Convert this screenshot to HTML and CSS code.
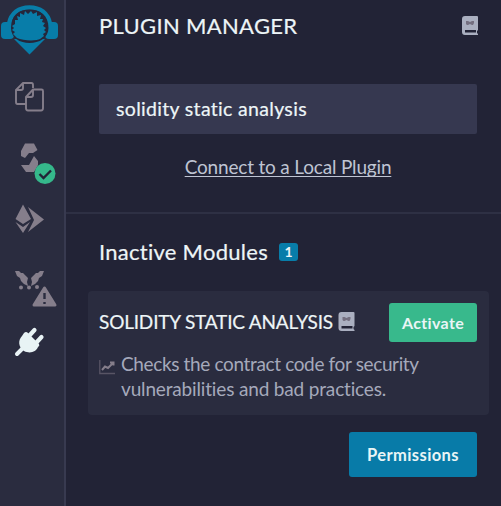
FILE: index.html
```html
<!DOCTYPE html>
<html lang="en">
<head>
<meta charset="utf-8">
<title>Plugin Manager</title>
<link rel="stylesheet" href="styles.css">
</head>
<body>
<nav class="rail">
  <svg class="icon logo" width="64" height="64" viewBox="0 0 64 64">
    <path d="M9 24C11 13 19 7.500 29.500 7.500S48 13 50 24" fill="none" stroke="currentColor" stroke-width="4.500"/>
    <rect x="1" y="22" width="13" height="17" rx="4"/><rect x="45" y="22" width="13" height="17" rx="4"/>
    <path d="M14 39L29.500 54.500L45 39Z"/>
    <path class="cut" d="M11 28C11 15 19 9.500 29.500 9.500S48.500 15 48.500 28C48.500 38 39 43 29.500 43S11 38 11 28Z"/>
    <path d="M15 20l3 0-1-4 3 1 0-4 4 2 1-4 3 3 3-3 2 3 4-2 0 4 4-1-1 4 3 0-1 3 3 1-2 3 3 2-2 2 2 2-3 2 1 2-4 3C37 41 23 41 17 38l-4-4 2-2-3-2 2-2-2-2 3-2z"/>
  </svg>
  <svg class="icon" width="64" height="60" viewBox="0 64 64 60">
    <g fill="none" stroke="currentColor" stroke-width="1.900" stroke-linejoin="round">
      <path d="M26 104H17.500Q16 104 16 102V90L23 83H31.500Q33 83 33 85V88M23 83V88Q23 90 21 90H16"/>
      <path d="M26 97L33 89.500H41.500Q43 89.500 43 91V108Q43 110.500 41 110.500H28Q26 110.500 26 108ZM33 89.500V95Q33 97 31 97H26"/>
    </g>
  </svg>
  <svg class="icon" width="64" height="66" viewBox="0 124 64 66">
    <path d="M25 143.500H34L37.500 150L33 153H29L25 158L21 156V151ZM34 156L38 161V165L34 172H26L21 165H29Z"/>
    <circle class="ok" cx="45" cy="173.500" r="10.500"/>
    <path class="tick" d="M39.500 174L43.500 178L51 170.500"/>
  </svg>
  <svg class="icon" width="64" height="58" viewBox="0 190 64 58">
    <path d="M23 204.500L31 219L23 224L15.500 219ZM15.500 222L23 227L30 222L23 233ZM28 207L44 219.500L28 232L34 220Z"/>
  </svg>
  <svg class="icon" width="64" height="66" viewBox="0 248 64 66">
    <path d="M15 271l4 0 2 2 2 0 5 5-1 4 1 4-4-2-3-3-1-3-3-2zM44 271l-4 0-2 2-2 0-5 5 1 4-1 4 4-2 3-3 1-3 3-2z"/>
    <circle cx="21" cy="287.500" r="2"/><circle cx="29" cy="287.500" r="2"/><circle cx="37" cy="287" r="2"/>
    <path class="warn" d="M44.500 288L55 305H34Z"/>
    <path class="mark" d="M44.500 293V299M44.500 302V304"/>
  </svg>
  <svg class="icon active" width="64" height="60" viewBox="0 314 64 60">
    <g fill="none" stroke="currentColor" stroke-linecap="round"><path d="M17 354L23 348" stroke-width="4"/><path d="M29 336L34.500 330M36 343L41.500 337" stroke-width="4.200"/></g>
    <path d="M24 333Q26 331 28 333L39 344Q40 346 38 347C36 352 30 354 24 351C18 347 18 340 22 336Z"/>
  </svg>
</nav>
<main class="panel">
  <section class="top">
    <header class="head">
      <h1 class="title">PLUGIN MANAGER</h1>
      <svg class="book" width="16" height="19" viewBox="0 0 16 19"><path d="M3 0H15Q16 0 16 1V14L15 15V17L16 18V19H3Q0 19 0 16V3Q0 0 3 0Z"/><path class="page" d="M3 14H14V16.500H3Z"/><path class="print" d="M4 5H6L8 6L10 5H12V7L11 9H10L8 8L6 9H5L4 8Z"/></svg>
    </header>
    <div class="search"><span class="query">solidity static analysis</span></div>
    <div class="connect"><a class="link">Connect to a Local Plugin</a></div>
  </section>
  <section class="modules">
    <div class="group"><h2 class="subtitle">Inactive Modules</h2><span class="badge">1</span></div>
    <article class="card">
      <div class="row">
        <h3 class="name">SOLIDITY STATIC ANALYSIS</h3>
        <svg class="book small" width="17" height="19" viewBox="0 0 16 19"><path d="M3 0H15Q16 0 16 1V14L15 15V17L16 18V19H3Q0 19 0 16V3Q0 0 3 0Z"/><path class="page" d="M3 14H14V16.500H3Z"/><path class="print" d="M4 5H6L8 6L10 5H12V7L11 9H10L8 8L6 9H5L4 8Z"/></svg>
        <button class="btn activate"><span>Activate</span></button>
      </div>
      <div class="info">
        <svg class="chart" width="16" height="15" viewBox="0 0 16 15"><path d="M.800 0V13.500H16" opacity=".5"/><path class="trend" d="M3 10L6 6.500L9 8L14 3M11 2.500H14.500V5.500"/></svg>
        <p class="desc"><span class="l1">Checks the contract code for security</span><br><span class="l2">vulnerabilities and bad practices.</span></p>
      </div>
    </article>
    <div class="foot"><button class="btn permissions"><span>Permissions</span></button></div>
  </section>
</main>
</body>
</html>
```
FILE: styles.css
```css
* { box-sizing: border-box; }
body { margin: 0; width: 501px; height: 506px; display: flex; overflow: hidden; background: #222336; color: #edf5f7; font-family: Lato, "Noto Sans", sans-serif; }
h1, h2, h3, p { margin: 0; font-weight: 400; white-space: nowrap; }
.rail { width: 66px; flex: none; display: flex; flex-direction: column; background: #2a2c3f; border-right: 2px solid #383a50; }
.icon { display: block; flex: none; fill: currentColor; color: #857e8b; }
.logo { color: #087da9; }
.active { color: #e8f3f5; }
.cut { fill: #25263a; }
.ok { fill: #35b88b; }
.tick { fill: none; stroke: #222336; stroke-width: 2.4; }
.warn { stroke: currentColor; stroke-width: 3; stroke-linejoin: round; }
.mark { stroke: #2a2c3f; stroke-width: 2.4; }
.panel { flex: 1; min-width: 0; }
.top { height: 214px; padding: 13px 24px 0 33px; border-bottom: 2px solid #2e3044; }
.head { display: flex; justify-content: space-between; height: 71px; }
.title { font-size: 22px; line-height: 26px; letter-spacing: .32px; -webkit-text-stroke: .2px; }
.book { fill: #aaafc0; margin: 3px -1px 0 0; flex: none; }
.page { fill: #222336; }
.print { fill: #746f80; }
.search { height: 50px; padding: 0 17px 2px; display: flex; align-items: center; border-radius: 2px; background: #363850; font-size: 19.5px; letter-spacing: .32px; -webkit-text-stroke: .2px; }
.connect { display: flex; justify-content: center; margin-top: 21px; }
.link { color: #bfc4d3; font-size: 19px; line-height: 24px; letter-spacing: -.18px; text-decoration: underline; text-decoration-thickness: 1px; text-underline-offset: 2px; text-decoration-skip-ink: none; white-space: nowrap; }
.modules { padding: 25px 12px 0 22px; }
.group { display: flex; align-items: center; height: 26px; padding-left: 11px; }
.subtitle { font-size: 22px; line-height: 26px; width: 180px; letter-spacing: .27px; -webkit-text-stroke: .2px; }
.badge { width: 19px; height: 18px; border-radius: 3px; background: #087da9; font-size: 14px; line-height: 18px; font-weight: 700; text-align: center; }
.card { margin-top: 26px; height: 124px; padding: 12px 12px 0 11px; border-radius: 4px; background: #2a2c3f; }
.row { display: flex; height: 39px; }
.name { font-size: 19px; line-height: 37px; width: 239px; letter-spacing: -.18px; -webkit-text-stroke: .2px; }
.small { margin: 9px 0 0; }
.btn { border: 0; padding: 0; border-radius: 3px; color: #e9f5f6; font-family: inherit; font-weight: 700; font-size: 16px; flex: none; }
.activate { width: 88px; height: 39px; padding-bottom: 1px; background: #38b98c; margin-left: auto; letter-spacing: .35px; }
.info { display: flex; margin-top: 9px; }
.chart { margin: 9px 6px 0 0; fill: none; stroke: #857e8b; stroke-width: 1.3; flex: none; }
.trend { stroke-width: 2; }
.desc { color: #a5a9bb; font-size: 19px; line-height: 25px; }
.l1 { letter-spacing: -.36px; }
.l2 { letter-spacing: -.16px; }
.foot { display: flex; justify-content: flex-end; padding: 17px 12px 0 0; }
.permissions { width: 128px; height: 45px; background: #087ba8; font-size: 16.5px; letter-spacing: .4px; }
```
